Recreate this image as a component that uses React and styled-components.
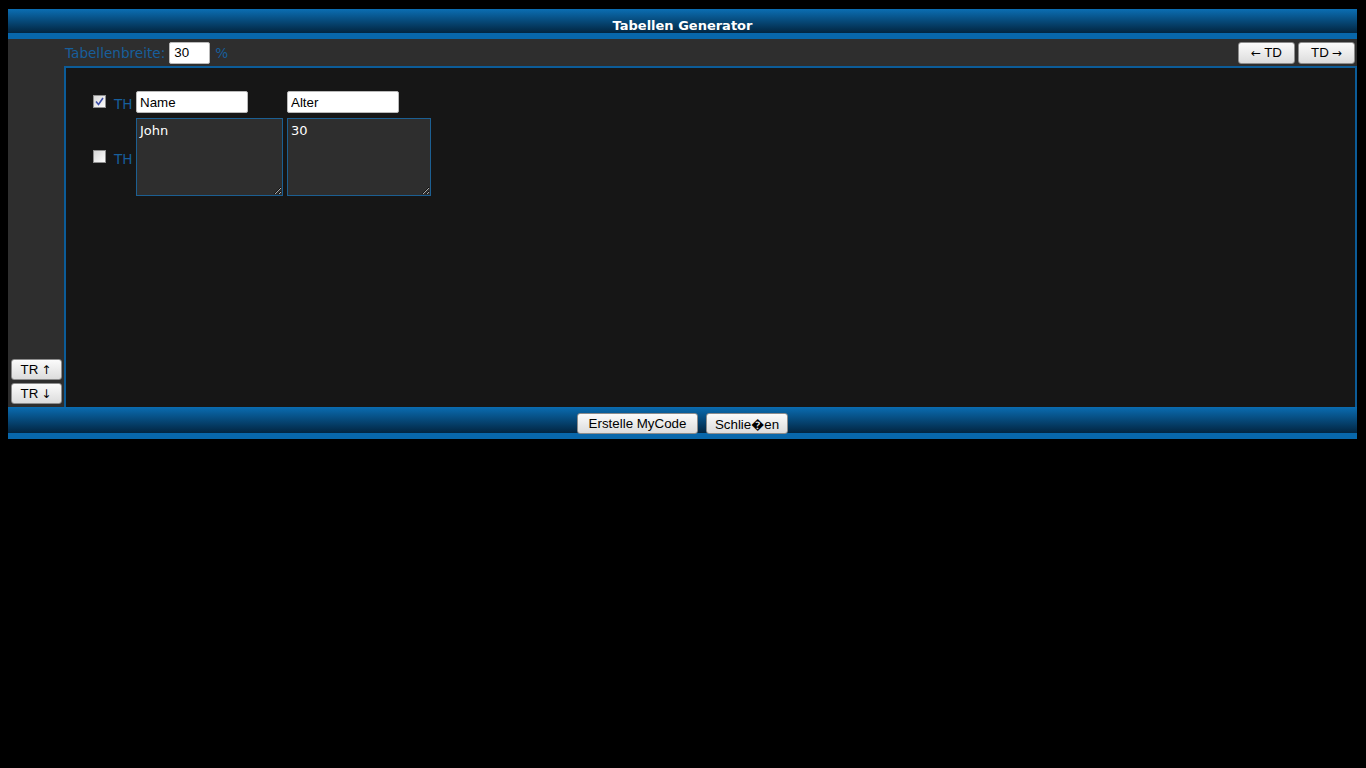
import React, { useState } from "react";
import styled, { createGlobalStyle } from "styled-components";

const GlobalStyle = createGlobalStyle`
  html, body {
    background: #000;
  }
  body {
    margin: 9px 8px;
    font-family: "DejaVu Sans", Verdana, sans-serif;
  }
`;

const Frame = styled.div`
  width: 1349px;
  display: flex;
  flex-direction: column;
`;

const Header = styled.div`
  height: 24px;
  background: linear-gradient(#0b6eb3, #022540);
  border-bottom: 6px solid #0867ab;
  color: #fff;
  font-weight: bold;
  font-size: 13px;
  line-height: 14px;
  display: flex;
  align-items: flex-end;
  justify-content: center;
  box-sizing: content-box;
`;

const Body = styled.div`
  display: flex;
  height: 368px;
`;

const SideColumn = styled.div`
  width: 56px;
  background: #2e2e2e;
  display: flex;
  flex-direction: column;
  justify-content: flex-end;
  align-items: center;
  gap: 3px;
  padding-bottom: 3px;
  box-sizing: border-box;
`;

const Content = styled.div`
  flex: 1;
  display: flex;
  flex-direction: column;
`;

const TopBar = styled.div`
  height: 27px;
  background: #2e2e2e;
  display: flex;
  align-items: center;
  padding: 0 2px 0 1px;
`;

const Label = styled.span`
  color: #175f9c;
  font-size: 13.6px;
`;

const WidthInput = styled.input`
  width: 41px;
  height: 22px;
  box-sizing: border-box;
  margin: 0 5px 0 4px;
  border: 1px solid #b9b9b9;
  border-radius: 2px;
  padding: 0 4px;
  font-family: "Liberation Sans", Arial, sans-serif;
  font-size: 13.33px;
  color: #000;
  background: #fff;
  outline: none;
`;

const Spacer = styled.div`
  flex: 1;
`;

const Button = styled.button`
  height: ${(p) => p.$h || 22}px;
  width: ${(p) => (p.$w ? `${p.$w}px` : "auto")};
  padding: 0;
  box-sizing: border-box;
  border: 1px solid #8c8c8c;
  border-radius: 3px;
  background: linear-gradient(#fbfbfb, #dcdcdc);
  color: #000;
  font-family: "Liberation Sans", Arial, sans-serif;
  font-size: 13.33px;
  white-space: nowrap;
  cursor: pointer;
`;

const Arrow = styled.span`
  font-family: "DejaVu Sans", sans-serif;
  font-size: 12px;
  color: #000;
  margin: ${(p) => p.$m || "0"};
`;

const ButtonGroup = styled.div`
  display: flex;
  gap: 3px;
`;

const Main = styled.div`
  flex: 1;
  background: #161616;
  border: 2px solid #0c5c98;
  border-bottom: none;
  padding: 23px 0 0 24px;
`;

const Grid = styled.div`
  display: grid;
  grid-template-columns: 42px 147px 144px;
  column-gap: 4px;
  row-gap: 5px;
  align-items: center;
  justify-items: start;
`;

const RowHead = styled.label`
  display: flex;
  align-items: center;
  gap: 8px;
  padding-left: 3px;
  color: #175f9c;
  font-size: 13.6px;
  margin-top: 3px;
`;

const Box = styled.span`
  width: 13px;
  height: 13px;
  box-sizing: border-box;
  border: 1px solid #8f8f8f;
  background: linear-gradient(135deg, #d8d8d8, #fdfdfd);
  display: inline-flex;
  align-items: center;
  justify-content: center;
  margin-top: -5px;
`;

const CellInput = styled.input`
  width: 112px;
  height: 22px;
  box-sizing: border-box;
  border: 1px solid #b9b9b9;
  border-radius: 2px;
  padding: 0 3px;
  font-family: "Liberation Sans", Arial, sans-serif;
  font-size: 13.33px;
  color: #000;
  background: #fff;
  outline: none;
`;

const CellArea = styled.textarea`
  width: ${(p) => p.$w}px;
  height: 78px;
  box-sizing: border-box;
  margin: 0;
  border: 1px solid #1c5f92;
  background: #2e2e2e;
  color: #fff;
  font-family: "DejaVu Sans", Verdana, sans-serif;
  font-size: 13px;
  padding: 4px 3px;
  outline: none;
`;

const Footer = styled.div`
  height: 32px;
  box-sizing: border-box;
  background: linear-gradient(#0a6cb1, #022541);
  border-bottom: 6px solid #0867ab;
  display: flex;
  justify-content: center;
  align-items: flex-start;
  gap: 8px;
  padding-top: 6px;
`;

const Check = ({ checked }) => (
  <Box>
    {checked && (
      <svg width="9" height="9" viewBox="0 0 9 9">
        <path d="M1 4.5 L3.5 7.5 L8 1" fill="none" stroke="#3c4fa8" strokeWidth="1.6" />
      </svg>
    )}
  </Box>
);

const App = () => {
  const [width, setWidth] = useState("30");
  return (
    <>
      <GlobalStyle />
      <Frame>
        <Header>Tabellen Generator</Header>
        <Body>
          <SideColumn>
            <Button $w={51} $h={21}>
              TR<Arrow $m="0 0 0 3px">↑</Arrow>
            </Button>
            <Button $w={51} $h={21}>
              TR<Arrow $m="0 0 0 3px">↓</Arrow>
            </Button>
          </SideColumn>
          <Content>
            <TopBar>
              <Label>Tabellenbreite:</Label>
              <WidthInput value={width} onChange={(e) => setWidth(e.target.value)} />
              <Label>%</Label>
              <Spacer />
              <ButtonGroup>
                <Button $w={57}>
                  <Arrow $m="0 3px 0 0">←</Arrow>TD
                </Button>
                <Button $w={57}>
                  TD<Arrow $m="0 0 0 3px">→</Arrow>
                </Button>
              </ButtonGroup>
            </TopBar>
            <Main>
              <Grid>
                <RowHead>
                  <Check checked />
                  TH
                </RowHead>
                <CellInput defaultValue="Name" />
                <CellInput defaultValue="Alter" />
                <RowHead>
                  <Check />
                  TH
                </RowHead>
                <CellArea $w={147} defaultValue="John" />
                <CellArea $w={144} defaultValue="30" />
              </Grid>
            </Main>
          </Content>
        </Body>
        <Footer>
          <Button $w={121} $h={21}>Erstelle MyCode</Button>
          <Button $w={82} $h={21}>Schlie{"\uFFFD"}en</Button>
        </Footer>
      </Frame>
    </>
  );
};

export default App;
